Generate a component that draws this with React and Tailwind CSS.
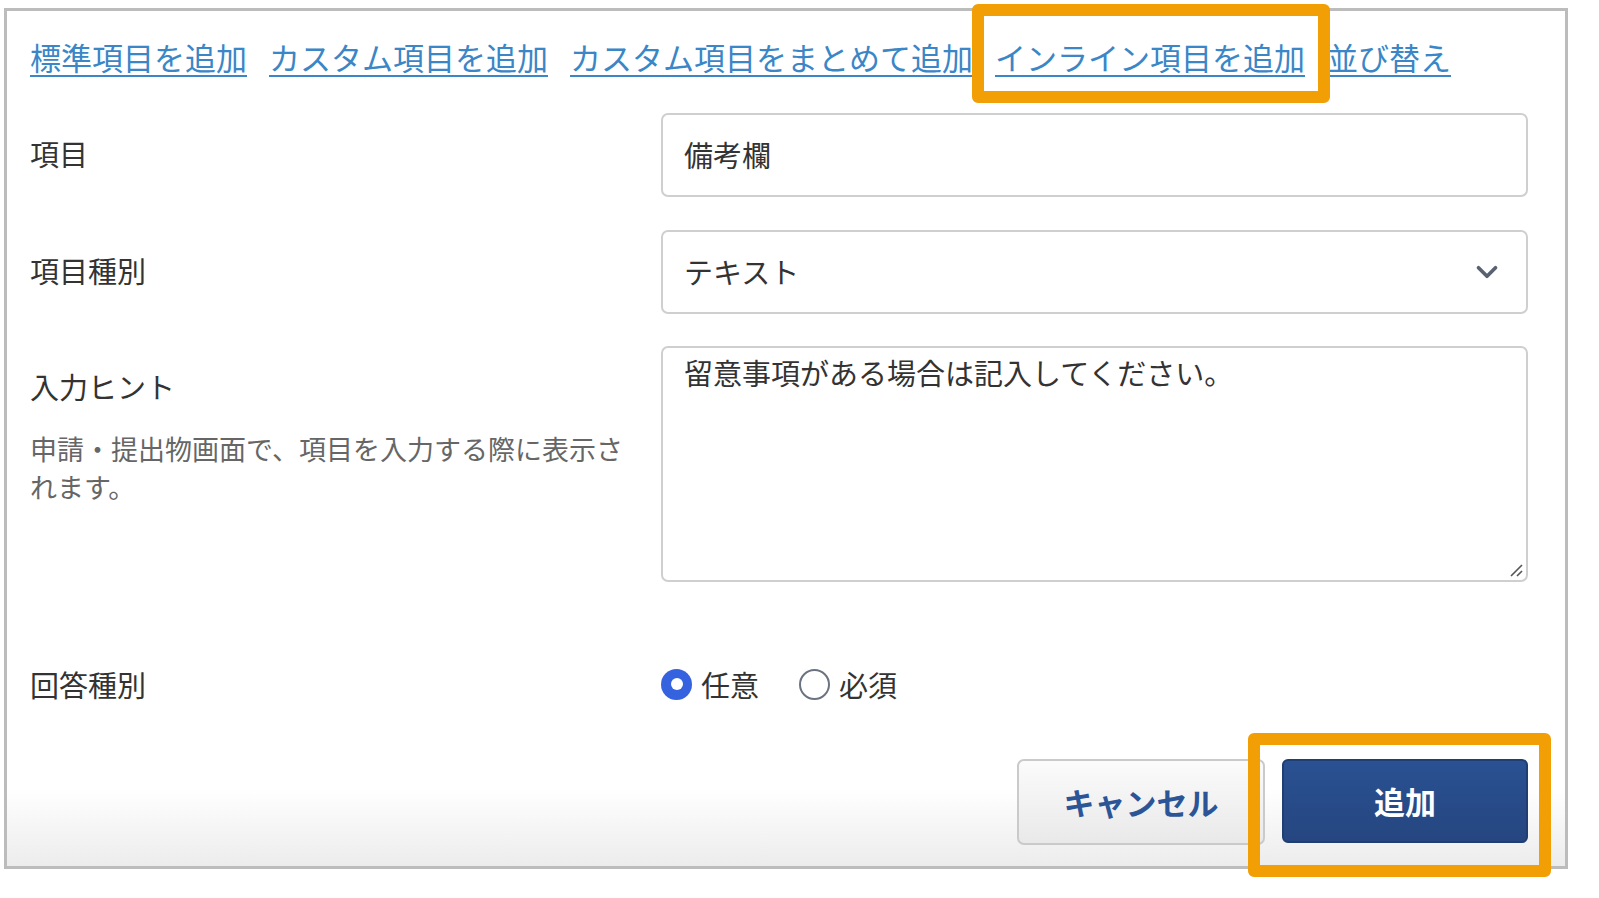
import { ChevronDown } from "lucide-react"

const FONT = { fontFamily: '"Noto Sans CJK JP", "Noto Sans", sans-serif' }

const links = ["標準項目を追加", "カスタム項目を追加", "カスタム項目をまとめて追加", "インライン項目を追加", "並び替え"]

function Label({ children }) {
  return <div className="w-[631px] shrink-0 text-[29px] leading-[40px] text-[#333] pt-[20px]">{children}</div>
}

export default function App() {
  return (
    <div className="relative w-[1599px] h-[898px] bg-white overflow-hidden" style={FONT}>
      <div className="ml-[4px] mt-[8px] w-[1564px] h-[861px] border-[3px] border-[#bcbcbc] bg-linear-to-b from-white from-[91%] to-[#ececec] pl-[23px] pr-[37px] pt-[26px]">
        {/* links */}
        <div className="flex gap-[22px] text-[31px] leading-[40px] text-[#3a86c6] whitespace-nowrap">
          {links.map((l) => (
            <a key={l} href="#" className="underline decoration-2 underline-offset-[5px]">{l}</a>
          ))}
        </div>

        {/* 項目 */}
        <div className="flex mt-[36px]">
          <Label>項目</Label>
          <div className="w-[868px] h-[84px] border-2 border-[#cfcfcf] rounded-[7px] flex items-center px-[21px] text-[29px] text-[#333]">
            備考欄
          </div>
        </div>

        {/* 項目種別 */}
        <div className="flex mt-[33px]">
          <Label>項目種別</Label>
          <div className="w-[868px] h-[84px] border-2 border-[#cfcfcf] rounded-[7px] flex items-center justify-between pl-[21px] pr-[22px] text-[29px] text-[#333]">
            <span>テキスト</span>
            <ChevronDown size={34} strokeWidth={2.6} className="text-[#5a6272]" />
          </div>
        </div>

        {/* 入力ヒント */}
        <div className="flex mt-[32px]">
          <div className="w-[631px] shrink-0 pt-[20px]">
            <div className="text-[29px] leading-[40px] text-[#333]">入力ヒント</div>
            <div className="mt-[24px] pr-[20px] text-[27px] leading-[38px] text-[#666]">
              申請・提出物画面で、項目を入力する際に表示されます。
            </div>
          </div>
          <div className="relative w-[868px] h-[236px] border-2 border-[#cfcfcf] rounded-[7px] px-[21px] pt-[4px] text-[29px] leading-[40px] text-[#333]">
            留意事項がある場合は記入してください。
            <svg className="absolute right-[2px] bottom-[2px]" width="16" height="16" viewBox="0 0 16 16">
              <path d="M14 3 L3 14 M14 9 L9 14" stroke="#555" strokeWidth="1.6" fill="none" />
            </svg>
          </div>
        </div>

        {/* 回答種別 */}
        <div className="flex items-center mt-[82px]">
          <div className="w-[631px] shrink-0 text-[29px] leading-[40px] text-[#333]">回答種別</div>
          <div className="flex items-center text-[29px] leading-[40px] text-[#333]">
            <span className="w-[31px] h-[31px] rounded-full bg-[#3563e0] flex items-center justify-center">
              <span className="w-[12px] h-[12px] rounded-full bg-white" />
            </span>
            <span className="ml-[9px]">任意</span>
            <span className="ml-[40px] w-[31px] h-[31px] rounded-full border-2 border-[#6b7280]" />
            <span className="ml-[9px]">必須</span>
          </div>
        </div>

        {/* buttons */}
        <div className="flex justify-end gap-[17px] mt-[55px]">
          <button className="w-[248px] h-[86px] rounded-[7px] border-2 border-[#cacaca] bg-linear-to-b from-[#fbfbfb] to-[#e9e9e9] text-[31px] font-bold text-[#2b5597]">
            キャンセル
          </button>
          <button className="w-[246px] h-[84px] rounded-[6px] border-2 border-[#1f3e72] bg-linear-to-b from-[#2a5192] to-[#254680] text-[31px] font-bold text-white">
            追加
          </button>
        </div>
      </div>

      {/* highlight boxes */}
      <div className="absolute left-[972px] top-[4px] w-[358px] h-[99px] border-[12px] border-[#f29f05] rounded-[6px]" />
      <div className="absolute left-[1248px] top-[733px] w-[303px] h-[144px] border-[12px] border-[#f29f05] rounded-[6px]" />
    </div>
  )
}
